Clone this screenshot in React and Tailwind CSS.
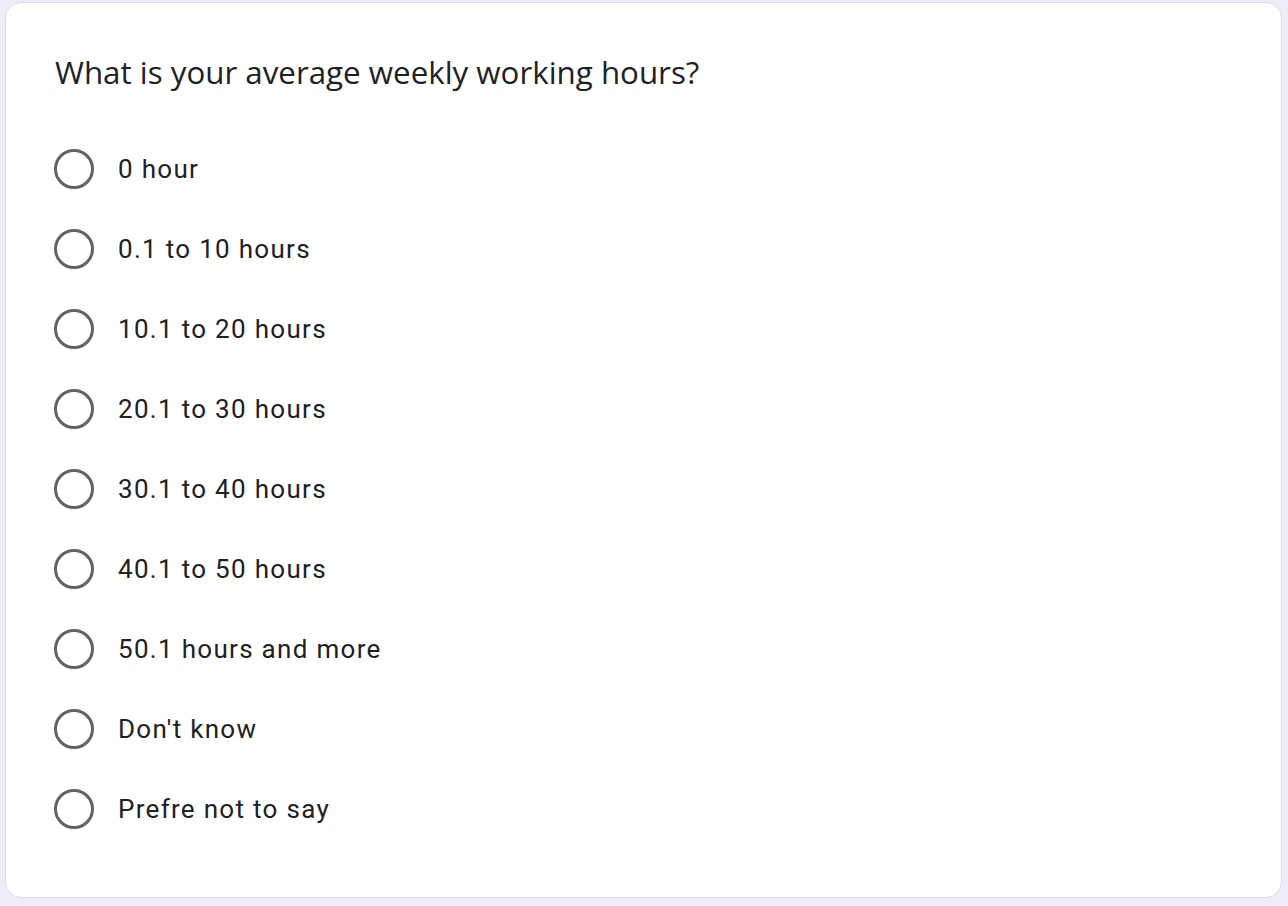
const options = [
  '0 hour',
  '0.1 to 10 hours',
  '10.1 to 20 hours',
  '20.1 to 30 hours',
  '30.1 to 40 hours',
  '40.1 to 50 hours',
  '50.1 hours and more',
  "Don't know",
  'Prefre not to say',
];

export default function App() {
  return (
    <div className="min-h-screen bg-[#f0ebf8] pl-[5px] pr-[6px] pt-[2px] pb-[8px]">
      <div className="h-[896px] rounded-[16px] border border-[#dadce0] bg-white pl-[48px] pt-[47px]">
        <h1 className="pl-[1px] text-[31.3px] leading-[44px] text-[#202124] font-['Open_Sans',sans-serif]">
          What is your average weekly working hours?
        </h1>
        <div className="mt-[35px] flex flex-col">
          {options.map((o) => (
            <label key={o} className="flex h-[80px] items-center gap-[24px]">
              <span className="h-[40px] w-[40px] rounded-full border-[3px] border-[#5f6368]" />
              <span className="text-[26px] tracking-[1.3px] text-[#202124] font-['Roboto',sans-serif]">{o}</span>
            </label>
          ))}
        </div>
      </div>
    </div>
  );
}
